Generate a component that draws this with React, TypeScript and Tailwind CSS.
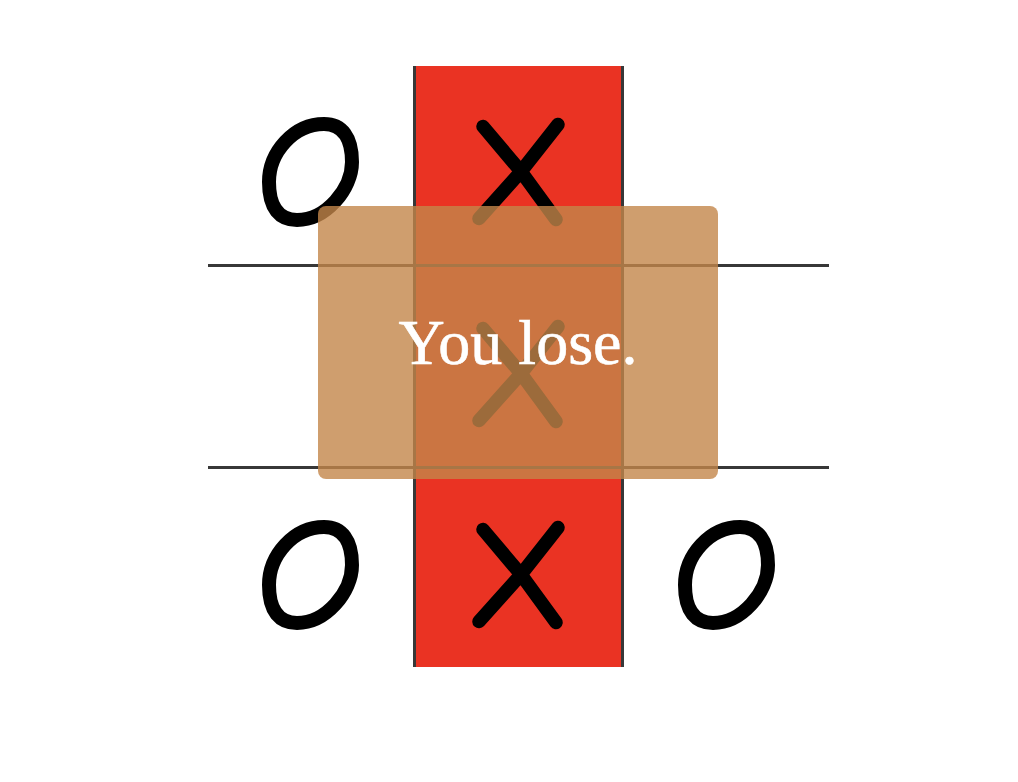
import React from 'react';

type Mark = 'X' | 'O' | '';

const board: Mark[] = ['O', 'X', '', '', 'X', '', 'O', 'X', 'O'];

function XMark() {
    return (
        <svg width="96" height="112" viewBox="0 0 96 112" fill="none">
            <path
                d="M12 10.5 L50 55.5 L85 103.5 M87 8.5 L50 55.5 L8 102.5"
                stroke="#000"
                strokeWidth="13.5"
                strokeLinecap="round"
                strokeLinejoin="round"
            />
        </svg>
    );
}

function OMark() {
    return (
        <svg width="97" height="110" viewBox="0 0 97 110" fill="none">
            <path
                d="M62 7 C80 7 90 20 90 45 C90 72 64 103 35 103 C18 103 7 92 7 65 C7 35 32 7 62 7 Z"
                stroke="#000"
                strokeWidth="14"
            />
        </svg>
    );
}

export default function App() {
    return (
        <div className="w-[1018px] h-[782px] bg-white pl-[208px] pt-[66px]">
            <div className="relative w-[621px]">
                {/* grid lines come from the gap showing the dark background */}
                <div className="grid grid-cols-[205px_205px_205px] grid-rows-[198px_199px_198px] gap-[3px] bg-[#383838]">
                    {board.map((mark, i) => (
                        <div
                            key={i}
                            className={
                                i % 3 === 1
                                    ? 'bg-[#ea3323] flex items-center justify-center pt-[14px]'
                                    : 'bg-white flex items-center justify-center pt-[14px]'
                            }
                        >
                            {mark === 'X' && <XMark />}
                            {mark === 'O' && <OMark />}
                        </div>
                    ))}
                </div>

                {/* Result banner */}
                <div className="absolute left-[110px] top-[140px] w-[400px] h-[273px] rounded-lg bg-[rgba(195,134,74,0.8)] flex items-center justify-center">
                    <span className="text-white text-[64px] leading-none font-['Liberation_Serif',serif] [-webkit-text-stroke:0.6px_white]">
                        You lose.
                    </span>
                </div>
            </div>
        </div>
    );
}
